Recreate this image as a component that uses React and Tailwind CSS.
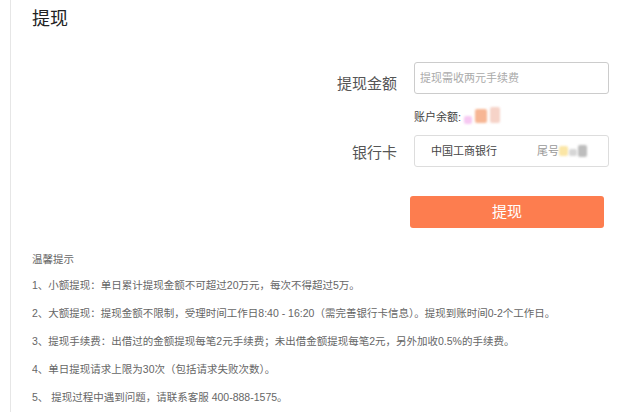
import React from 'react';

const tips = [
  '1、小额提现：单日累计提现金额不可超过20万元，每次不得超过5万。',
  '2、大额提现：提现金额不限制，受理时间工作日8:40 - 16:20（需完善银行卡信息）。提现到账时间0-2个工作日。',
  '3、提现手续费：出借过的金额提现每笔2元手续费；未出借金额提现每笔2元，另外加收0.5%的手续费。',
  '4、单日提现请求上限为30次（包括请求失败次数）。',
  '5、 提现过程中遇到问题，请联系客服 400-888-1575。',
];

// blurred bits that hide the balance / card tail in the original
const Smudge = ({ items, className = '' }) => (
  <span className={`inline-flex items-center ${className}`}>
    {items.map((c, i) => (
      <span key={i} className={`inline-block rounded-[2px] blur-[1px] ${c}`} />
    ))}
  </span>
);

const App = () => {
  return (
    <div className="w-[640px] h-[412px] bg-white overflow-hidden font-['Liberation_Sans','Noto_Sans_CJK_SC',sans-serif]">
      <div className="ml-[10px] h-full border-l border-[#e6e6e6] pl-[21px]">
        <h1 className="pt-[8px] text-[18px] leading-[22px] text-[#222]">提现</h1>

        {/* form */}
        <div className="mt-[32px] flex items-start">
          <div className="w-[365px] pt-[13px] text-right text-[15px] leading-[17px] text-[#555]">提现金额</div>
          <div className="ml-[17px] w-[195px]">
            <input
              type="text"
              placeholder="提现需收两元手续费"
              className="w-full h-[32px] border border-[#ccc] rounded-[3px] pl-[5px] text-[11px] text-[#333] placeholder-[#aaa] outline-none"
            />
            <div className="mt-[16px] flex items-center text-[11px] leading-[14px] text-[#444]">
              账户余额:
              <Smudge
                className="ml-[3px] gap-[3px]"
                items={[
                  'w-[8px] h-[8px] bg-[#f6c8f2] mt-[5px]',
                  'w-[12px] h-[14px] bg-[#f7b694] -mt-[2px]',
                  'w-[10px] h-[16px] bg-[#f6d3c8] -mt-[5px]',
                ]}
              />
            </div>
          </div>
        </div>

        <div className="mt-[11px] flex items-start">
          <div className="w-[365px] pt-[9px] text-right text-[15px] leading-[17px] text-[#555]">银行卡</div>
          <div className="ml-[17px] w-[195px] h-[32px] border border-[#ddd] rounded-[3px] flex items-center text-[11px] text-[#444]">
            <span className="pl-[16px] w-[122px]">中国工商银行</span>
            <span className="text-[#999]">尾号</span>
            <Smudge
              className="gap-[1px]"
              items={[
                'w-[9px] h-[10px] bg-[#fbe6a6]',
                'w-[8px] h-[7px] bg-[#d6d6d6] mt-[3px]',
                'w-[9px] h-[12px] bg-[#bdbdbd]',
              ]}
            />
          </div>
        </div>

        <button className="mt-[29px] ml-[378px] w-[194px] h-[32px] rounded-[3px] bg-[#fd7d4f] text-white text-[15px]">
          提现
        </button>

        {/* tips */}
        <div className="mt-[24px] text-[10.5px] leading-[14px] text-[#666]">
          <p>温馨提示</p>
          {tips.map((t, i) => (
            <p key={i} className={i === 0 ? 'mt-[12px]' : 'mt-[14px]'}>{t}</p>
          ))}
        </div>
      </div>
    </div>
  );
};

export default App;
